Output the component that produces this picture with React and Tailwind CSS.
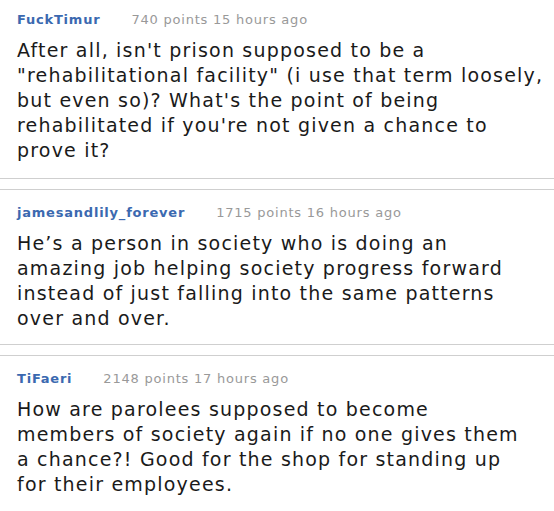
export default function App() {
  const comments = [
    {
      name: "FuckTimur",
      meta: "740 points 15 hours ago",
      lines: [
        "After all, isn't prison supposed to be a",
        "\"rehabilitational facility\" (i use that term loosely,",
        "but even so)? What's the point of being",
        "rehabilitated if you're not given a chance to",
        "prove it?",
      ],
    },
    {
      name: "jamesandlily_forever",
      meta: "1715 points 16 hours ago",
      lines: [
        "He\u2019s a person in society who is doing an",
        "amazing job helping society progress forward",
        "instead of just falling into the same patterns",
        "over and over.",
      ],
    },
    {
      name: "TiFaeri",
      meta: "2148 points 17 hours ago",
      lines: [
        "How are parolees supposed to become",
        "members of society again if no one gives them",
        "a chance?! Good for the shop for standing up",
        "for their employees.",
      ],
    },
  ];
  return (
    <div className="w-[554px] h-[511px] overflow-hidden bg-white" style={{ fontFamily: '"DejaVu Sans", Verdana, sans-serif' }}>
      {comments.map((c, i) => (
        <div key={i}>
          {i > 0 && <div className="h-[12px] border-y border-[#cfcfcf]" />}
          <div className={`pl-[17px] ${i === 0 ? "pt-[11px] pb-[15px]" : "pt-[14px] pb-[13px]"}`}>
            <div className="flex items-center text-[13px] leading-[18px] tracking-[0.06em] mb-[9px]">
              <span className="font-bold text-[#3b69b0]">{c.name}</span>
              <span className="ml-[31px] text-[#999999]">{c.meta}</span>
            </div>
            <p className="text-[19px] leading-[25px] tracking-[0.063em] text-[#1a1a1a] whitespace-nowrap">
              {c.lines.map((l, j) => (
                <span key={j} className="block">{l}</span>
              ))}
            </p>
          </div>
        </div>
      ))}
    </div>
  );
}
